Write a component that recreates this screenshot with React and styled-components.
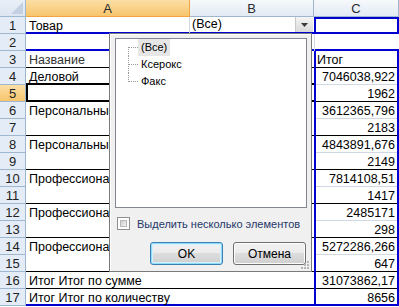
import styled, { createGlobalStyle } from "styled-components";

const GlobalStyle = createGlobalStyle`
  html, body {
    margin: 0;
    padding: 0;
    background: #fff;
  }
  body {
    font-family: "Liberation Sans", Arial, sans-serif;
  }
`;

const HEAD_LINE = "#9EB6CE";
const GRID = "#D0D7E5";
const BLUE = "#0000D0";
const BLACK = "#000";

// inset lines around a cell: [width, colour]
const lines = (p) => {
  const s = [];
  if (p.$l) s.push(`inset ${p.$l[0]}px 0 0 ${p.$l[1]}`);
  if (p.$r) s.push(`inset -${p.$r[0]}px 0 0 ${p.$r[1]}`);
  if (p.$t) s.push(`inset 0 ${p.$t[0]}px 0 ${p.$t[1]}`);
  if (p.$b) s.push(`inset 0 -${p.$b[0]}px 0 ${p.$b[1]}`);
  return s.length ? s.join(", ") : "none";
};

const Sheet = styled.div`
  position: relative;
  display: grid;
  grid-template-columns: 26px 164px 124px 85px;
  grid-auto-rows: 17px;
  width: 399px;
  height: 307px;
  overflow: hidden;
  background: #fff;
`;

const Corner = styled.div`
  box-sizing: border-box;
  display: flex;
  align-items: flex-end;
  justify-content: flex-end;
  padding: 0 2px 2px 0;
  background: linear-gradient(#E9EFF7, #DCE5F1);
  border-right: 1px solid ${HEAD_LINE};
  border-bottom: 1px solid ${HEAD_LINE};
`;

const ColHeader = styled.div`
  box-sizing: border-box;
  display: flex;
  align-items: center;
  justify-content: center;
  font-size: 13px;
  color: #2b2b2b;
  background: ${(p) =>
    p.$active
      ? "linear-gradient(#FCDFA6, #F6C46C)"
      : "linear-gradient(#F6F9FC, #E2EAF4)"};
  border-right: 1px solid ${(p) => (p.$active ? "#F2A541" : HEAD_LINE)};
  border-bottom: 1px solid ${(p) => (p.$active ? "#F2A541" : HEAD_LINE)};
`;

const RowHeader = styled.div`
  box-sizing: border-box;
  display: flex;
  align-items: center;
  justify-content: center;
  font-size: 13px;
  color: #222;
  background: ${(p) =>
    p.$active ? "linear-gradient(#FCDFA6, #F6C46C)" : "#E4ECF7"};
  border-right: 1px solid ${HEAD_LINE};
  border-bottom: 1px solid ${HEAD_LINE};
`;

const Cell = styled.div`
  grid-column: span ${(p) => p.$span || 1};
  display: flex;
  align-items: center;
  justify-content: ${(p) => (p.$num ? "flex-end" : "flex-start")};
  padding: 0 ${(p) => (p.$num ? "4px" : "3px")} 0 3px;
  font-size: 12.5px;
  color: ${(p) => (p.$muted ? "#333" : "#000")};
  white-space: nowrap;
  overflow: hidden;
  background: #fff;
  box-shadow: ${lines};
`;

const FilterCell = styled(Cell)`
  justify-content: space-between;
  padding: 0 1px 0 2px;
  align-items: flex-start;
  line-height: 15px;
`;

const DropButton = styled.div`
  width: 17px;
  height: 15px;
  display: flex;
  align-items: center;
  justify-content: center;
  background: linear-gradient(#F4F4F4, #D9D9D9);
  border-left: 1px solid #C8C8C8;
`;

const Popup = styled.div`
  position: absolute;
  left: 109px;
  top: 33px;
  width: 203px;
  height: 239px;
  box-sizing: border-box;
  border: 1px solid #7A7A7A;
  background: #F0F0F0;
  box-shadow: inset 1px 1px 0 #fff;
  padding: 4px 4px 0 5px;
  display: flex;
  flex-direction: column;
  font-size: 11px;
  color: #000;
`;

const ListBox = styled.div`
  height: 170px;
  box-sizing: border-box;
  border: 1px solid #828790;
  background: #fff;
  display: flex;
  flex-direction: column;
`;

const TreeItem = styled.div`
  display: flex;
  height: 17px;
  align-items: center;
`;

const Connector = styled.span`
  position: relative;
  width: 22px;
  height: 17px;
  flex: none;

  &::before {
    content: "";
    position: absolute;
    left: 12px;
    top: ${(p) => (p.$first ? "8px" : "0")};
    bottom: ${(p) => (p.$last ? "8px" : "0")};
    border-left: 1px dotted #9A9A9A;
  }

  &::after {
    content: "";
    position: absolute;
    left: 13px;
    top: 8px;
    width: 9px;
    border-top: 1px dotted #9A9A9A;
  }
`;

const ItemLabel = styled.span`
  padding: 0 3px;
  line-height: 17px;
  background: ${(p) => (p.$sel ? "#E6E6E6" : "transparent")};
`;

const CheckRow = styled.label`
  display: flex;
  align-items: center;
  gap: 7px;
  margin: 9px 0 0 2px;
  color: #1E3768;
  font-size: 11px;
  white-space: nowrap;
`;

const CheckBox = styled.span`
  width: 13px;
  height: 13px;
  flex: none;
  box-sizing: border-box;
  border: 1px solid #8E8F8F;
  background: #fff;
  padding: 2px;
  display: flex;

  &::before {
    content: "";
    flex: 1;
    background: linear-gradient(135deg, #CBCBCB, #F4F4F4);
    border: 1px solid #B8B8B8;
  }
`;

const ButtonRow = styled.div`
  display: flex;
  justify-content: flex-end;
  gap: 10px;
  margin-top: 12px;
  padding-right: 1px;
`;

const Button = styled.button`
  width: 73px;
  height: 23px;
  box-sizing: border-box;
  border-radius: 3px;
  border: 1px solid ${(p) => (p.$focus ? "#3C7FB1" : "#707070")};
  background: linear-gradient(#F2F2F2 0%, #EBEBEB 49%, #DDDDDD 50%, #CFCFCF 100%);
  box-shadow: ${(p) =>
    p.$focus ? "inset 0 0 0 1px #8FDCFB, inset 0 0 0 2px #D4F0FC" : "inset 0 0 0 1px #FCFCFC"};
  font-family: "Liberation Sans", Arial, sans-serif;
  font-size: 12px;
  color: #000;
  padding: 0;
`;

const Grip = styled.svg`
  position: absolute;
  right: 2px;
  bottom: 2px;
`;

const rows = [
  { a: "Товар", ab: [2, BLUE], filter: "(Все)", c: "", ct: [2, BLUE], cb: [2, BLUE] },
  { a: "", ab: [2, BLUE], c: "", cb: [2, BLUE] },
  { a: "Название", muted: true, ab: [1, BLACK], c: "Итог", ctext: true, cb: [1, BLACK] },
  { a: "Деловой", ab: [2, BLACK], c: "7046038,922", cb: [1, GRID] },
  { a: "", active: true, ab: [2, BLACK], c: "1962", cb: [1, BLACK] },
  { a: "Персональные компьютеры", c: "3612365,796", cb: [1, GRID] },
  { a: "", ab: [1, BLACK], c: "2183", cb: [1, BLACK] },
  { a: "Персональные принтеры", c: "4843891,676", cb: [1, GRID] },
  { a: "", ab: [1, BLACK], c: "2149", cb: [1, BLACK] },
  { a: "Профессиональные копиры", c: "7814108,51", cb: [1, GRID] },
  { a: "", ab: [1, BLACK], c: "1417", cb: [1, BLACK] },
  { a: "Профессиональные принтеры", c: "2485171", cb: [1, GRID] },
  { a: "", ab: [1, BLACK], c: "298", cb: [1, BLACK] },
  { a: "Профессиональные сканеры", c: "5272286,266", cb: [1, GRID] },
  { a: "", ab: [1, BLACK], wide: true, c: "647", cb: [1, BLACK] },
  { a: "Итог Итог по сумме", ab: [1, BLACK], wide: true, c: "31073862,17", cb: [1, BLACK] },
  { a: "Итог Итог по количеству", ab: [2, BLUE], wide: true, c: "8656", cb: [2, BLUE] },
];

const items = ["(Все)", "Ксерокс", "Факс"];

export default function App() {
  return (
    <>
      <GlobalStyle />
      <Sheet>
        <Corner>
          <svg width="12" height="12" viewBox="0 0 12 12">
            <polygon points="12,0 12,12 0,12" fill="#C3D0E2" />
          </svg>
        </Corner>
        <ColHeader $active>A</ColHeader>
        <ColHeader>B</ColHeader>
        <ColHeader>C</ColHeader>

        {rows.map((r, i) => {
          const n = i + 1;
          const side = n === 2 ? null : [2, BLUE];
          return [
            <RowHeader key={`h${n}`} $active={r.active}>
              {n}
            </RowHeader>,
            r.wide ? (
              <Cell key={`a${n}`} $span={2} $b={r.ab}>
                {r.a}
              </Cell>
            ) : (
              <Cell
                key={`a${n}`}
                $b={r.ab}
                $muted={r.muted}
                $l={r.active ? [2, BLACK] : null}
                $r={n === 1 ? [1, GRID] : null}
              >
                {r.a}
              </Cell>
            ),
            r.wide ? null : r.filter ? (
              <FilterCell key={`b${n}`} $b={r.ab}>
                <span>{r.filter}</span>
                <DropButton>
                  <svg width="7" height="4" viewBox="0 0 7 4">
                    <polygon points="0,0 7,0 3.5,4" fill="#3A3A3A" />
                  </svg>
                </DropButton>
              </FilterCell>
            ) : (
              <Cell key={`b${n}`} $b={r.ab} />
            ),
            <Cell
              key={`c${n}`}
              $num={!r.ctext}
              $l={side || [1, GRID]}
              $r={side}
              $t={r.ct}
              $b={r.cb}
            >
              {r.c}
            </Cell>,
          ];
        })}

        <Popup>
          <ListBox>
            {items.map((t, i) => (
              <TreeItem key={t}>
                <Connector $first={i === 0} $last={i === items.length - 1} />
                <ItemLabel $sel={i === 0}>{t}</ItemLabel>
              </TreeItem>
            ))}
          </ListBox>
          <CheckRow>
            <CheckBox />
            Выделить несколько элементов
          </CheckRow>
          <ButtonRow>
            <Button $focus>OK</Button>
            <Button>Отмена</Button>
          </ButtonRow>
          <Grip width="8" height="8" viewBox="0 0 8 8">
            <rect x="6" y="0" width="2" height="2" fill="#B5B5B5" />
            <rect x="3" y="3" width="2" height="2" fill="#B5B5B5" />
            <rect x="6" y="3" width="2" height="2" fill="#B5B5B5" />
            <rect x="0" y="6" width="2" height="2" fill="#B5B5B5" />
            <rect x="3" y="6" width="2" height="2" fill="#B5B5B5" />
            <rect x="6" y="6" width="2" height="2" fill="#B5B5B5" />
          </Grip>
        </Popup>
      </Sheet>
    </>
  );
}
